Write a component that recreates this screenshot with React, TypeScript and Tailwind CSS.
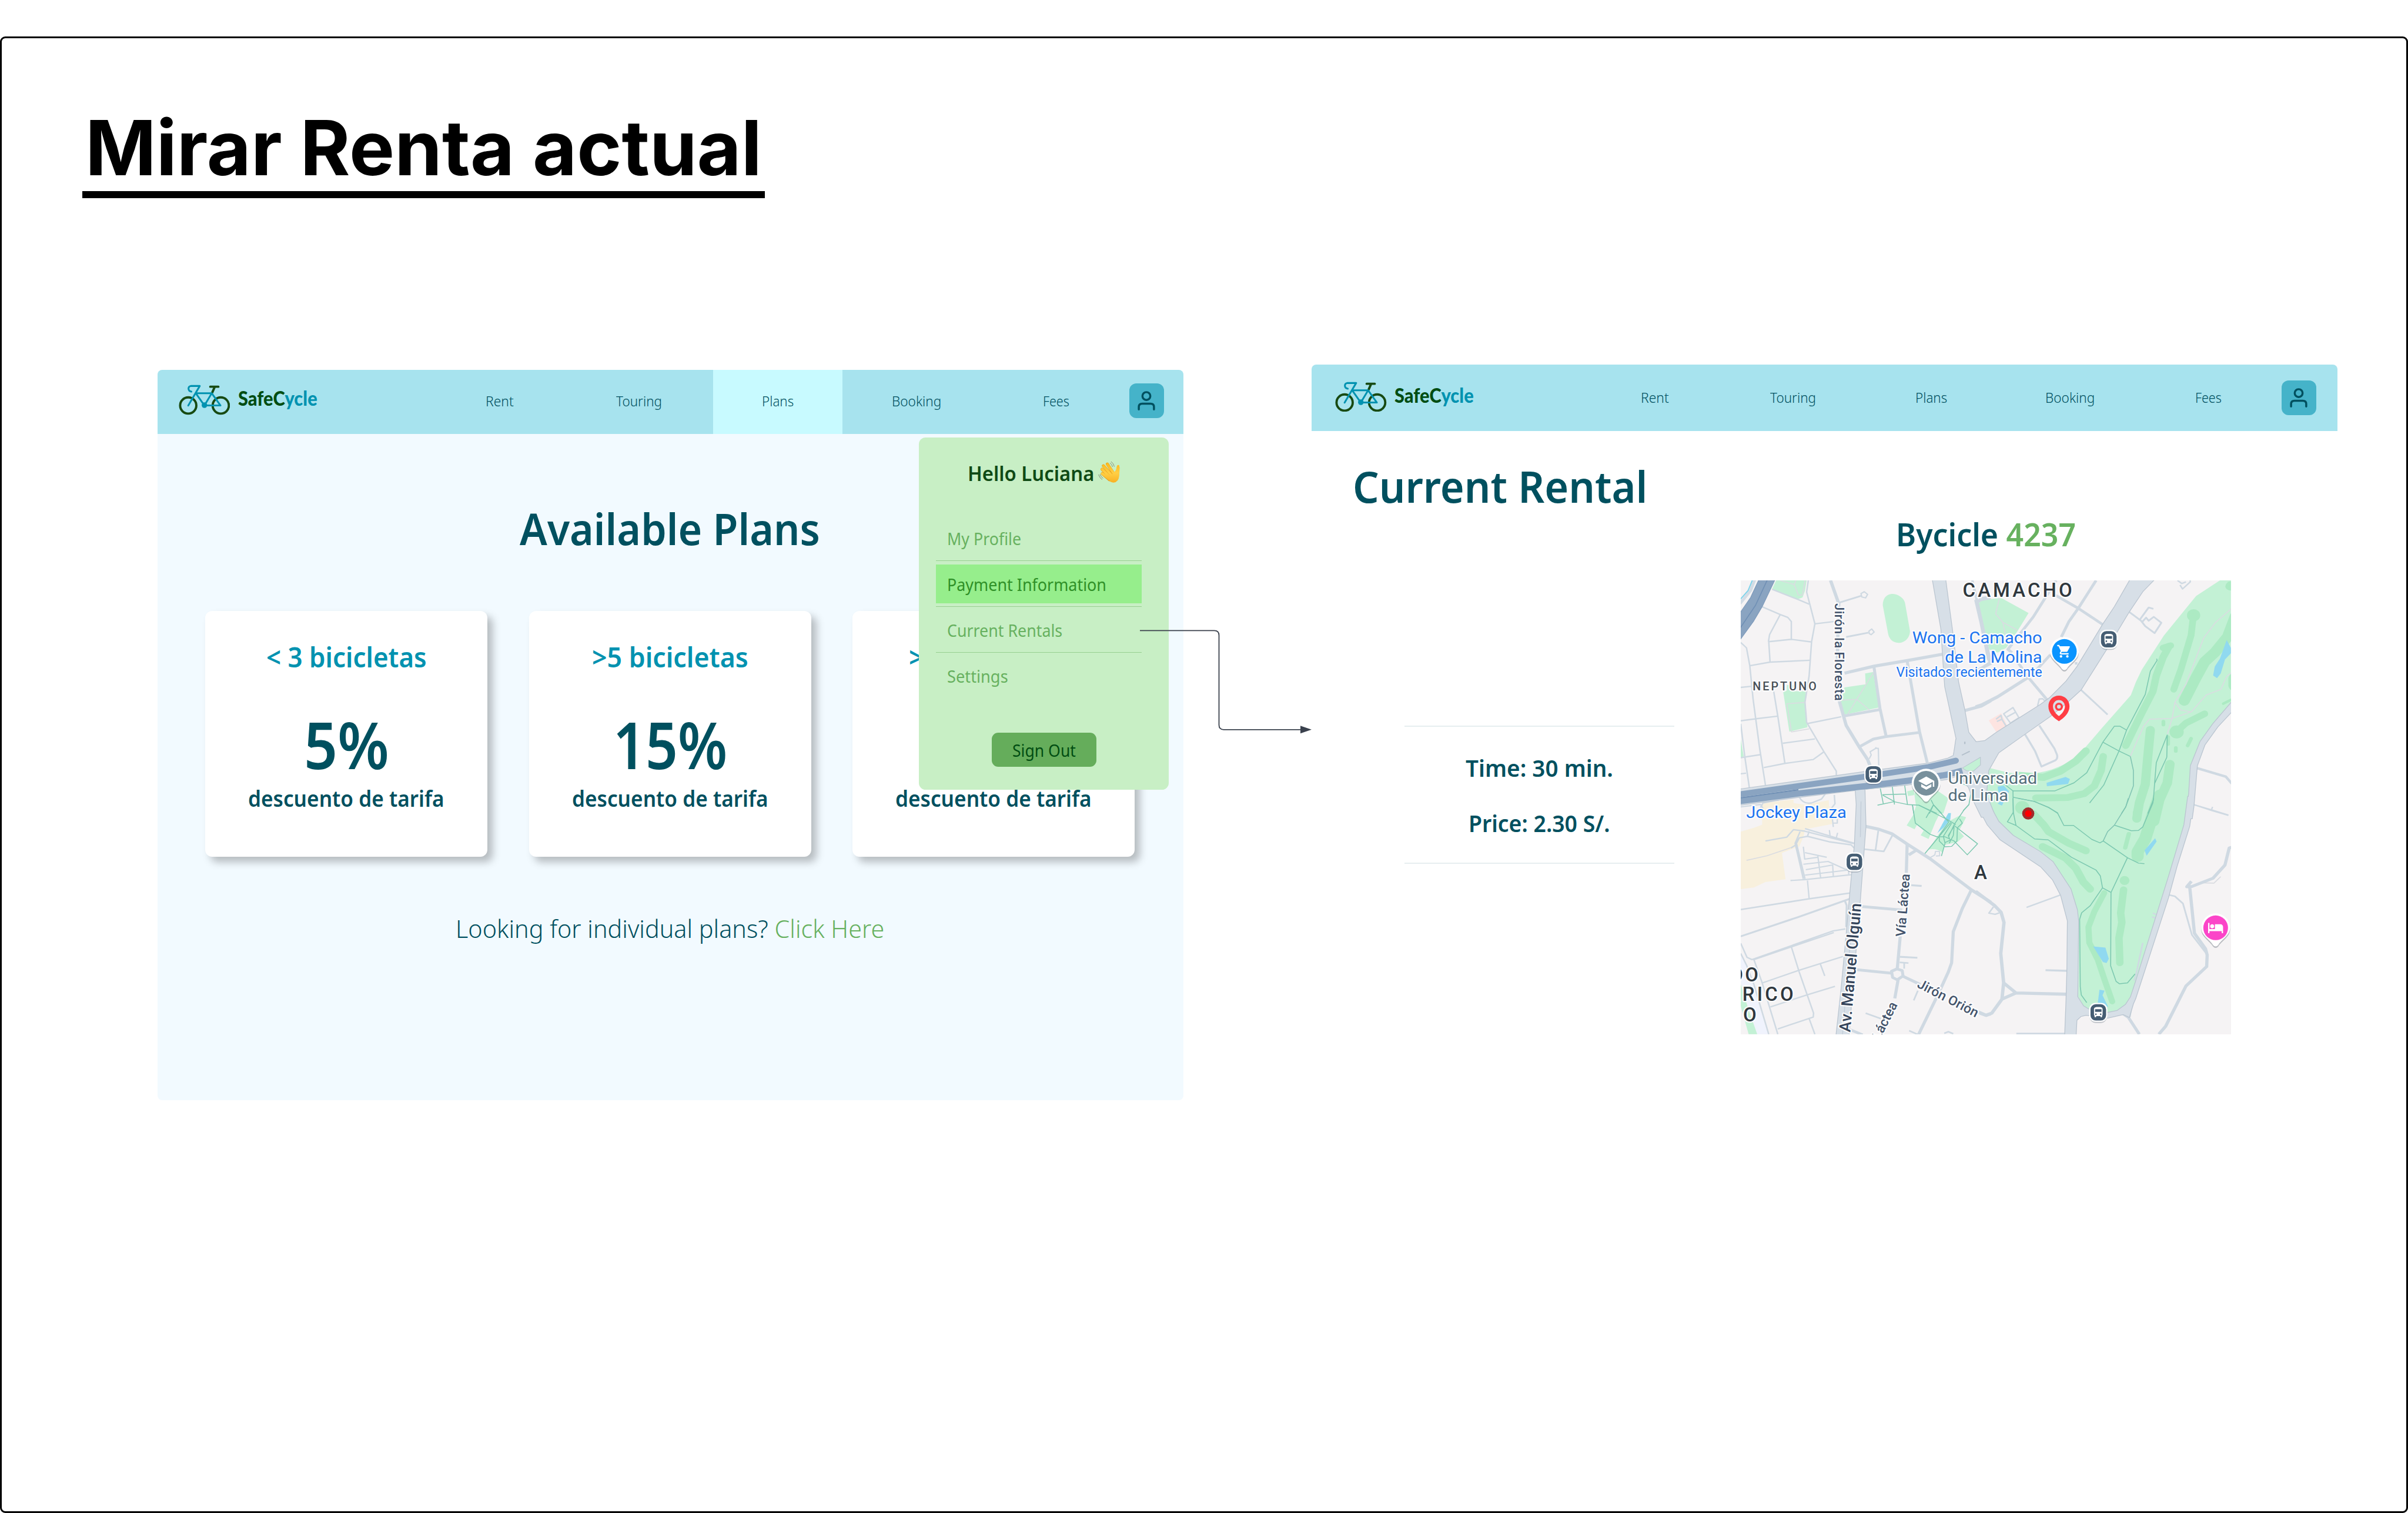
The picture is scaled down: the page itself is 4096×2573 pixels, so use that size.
import { useLayoutEffect, useRef, useState } from "react";
import type { ReactNode } from "react";
import { MdDirectionsBus, MdHotel, MdSchool, MdShoppingCart } from "react-icons/md";

/* Text squeezed or stretched horizontally to an exact width. */
function Fit({ w, className = "", children }: { w: number; className?: string; children: ReactNode }) {
  const ref = useRef<HTMLSpanElement>(null);
  const [scale, setScale] = useState(1);
  useLayoutEffect(() => {
    if (ref.current) setScale(w / ref.current.offsetWidth);
  }, [w]);
  return (
    <span className={`block ${className}`} style={{ width: w }}>
      <span ref={ref} className="inline-block origin-left whitespace-nowrap" style={{ transform: `scaleX(${scale})` }}>
        {children}
      </span>
    </span>
  );
}

function Bike() {
  return (
    <svg viewBox="60 96 406 240" className="h-[51.7px] w-[87.5px] shrink-0" fill="none" strokeLinecap="round" strokeLinejoin="round">
      <g stroke="#174a12" strokeWidth="18">
        <circle cx="135" cy="261" r="64" />
        <circle cx="392" cy="261" r="64" />
        <path d="M309 113H373M345 113L325 158" />
      </g>
      <g stroke="#0092b0" strokeWidth="14">
        <path d="M135 262L226 107H155Q137 110 137 128Q138 148 160 152" />
        <path d="M196 164H320L390 261H263L196 166M320 166L263 261" />
      </g>
      <circle cx="263" cy="259" r="22" fill="#0092b0" />
    </svg>
  );
}

function UserButton() {
  return (
    <span className="flex size-[59px] shrink-0 items-center justify-center rounded-[12px] bg-[#45b3c9]">
      <svg viewBox="0 0 46 52" className="h-[33.5px] w-[30px]" fill="none" stroke="#00505f" strokeWidth="5.4" strokeLinecap="round">
        <circle cx="23" cy="13.3" r="10.4" />
        <path d="M3 48.5V42Q3 33.5 12 33.5H34Q43 33.5 43 42V48.5" />
      </svg>
    </span>
  );
}

const LINKS = [
  { label: "Rent", w: 48 },
  { label: "Touring", w: 78.5 },
  { label: "Plans", w: 54.5 },
  { label: "Booking", w: 84.5 },
  { label: "Fees", w: 44.5 },
];

function NavBar({ active, right = false }: { active?: string; right?: boolean }) {
  return (
    <nav
      className={
        right
          ? "flex h-[112.2px] items-center rounded-t-[8px] bg-[#a7e3ee] pl-[40.4px]"
          : "flex h-[109.3px] items-center rounded-t-[8px] bg-[#a7e3ee] pl-[35.4px]"
      }
    >
      <div className={right ? "flex w-[434px] items-center pb-[4px]" : "flex w-[436.6px] items-center pb-[7px]"}>
        <Bike />
        <Fit w={134.5} className="-mt-[5px] ml-[13.5px] font-['Lato'] text-[33.5px] leading-[44px] font-black text-[#004d12]">
          SafeC<span className="text-[#0092b0]">ycle</span>
        </Fit>
      </div>
      <div className="flex h-full gap-4">
        {LINKS.map((l) => (
          <div
            key={l.label}
            className={`flex h-full items-center justify-center ${right ? "w-[219.4px]" : "w-[220.4px] pb-[2px]"} ${
              active === l.label ? "bg-[#c8faff]" : ""
            }`}
          >
            <Fit w={l.w} className="text-[23.8px] leading-[32px] font-light text-[#00505f]">
              {l.label}
            </Fit>
          </div>
        ))}
      </div>
      <div className={right ? "ml-[14.5px] pt-[1px]" : "ml-[14.6px] pb-[4px]"}>
        <UserButton />
      </div>
    </nav>
  );
}

function PlanCard({ title, titleW, value, valueW }: { title: string; titleW: number; value: string; valueW: number }) {
  return (
    <div className="flex h-[418px] w-[480px] shrink-0 flex-col items-center rounded-[12px] bg-white pt-[47.5px] shadow-[9px_9px_14px_rgba(0,0,0,0.25)]">
      <Fit w={titleW} className="text-[46px] leading-[60px] font-semibold text-[#0092b0]">
        {title}
      </Fit>
      <Fit w={valueW} className="mt-[58px] text-[111px] leading-[120px] font-semibold text-[#00505f]">
        {value}
      </Fit>
      <Fit w={334} className="mt-[8px] text-[37.5px] leading-[50px] font-semibold text-[#00505f]">
        descuento de tarifa
      </Fit>
    </div>
  );
}

function WavingHand() {
  return (
    <svg viewBox="0 0 100 100" className="ml-[7px] h-[37px] w-[37px] -translate-y-[2px]" fill="none" strokeLinecap="round" strokeLinejoin="round">
      <defs>
        <linearGradient id="skin" x1="0" y1="0" x2="0" y2="100" gradientUnits="userSpaceOnUse">
          <stop offset="0" stopColor="#fdb515" />
          <stop offset="0.55" stopColor="#ffcf45" />
          <stop offset="1" stopColor="#f9b022" />
        </linearGradient>
      </defs>
      <path d="M36 66L60 38L74 50Q84 44 86 26L99 28L97 66Q94 98 70 99Q58 99 46 84Z" fill="url(#skin)" />
      <g stroke="#e39a1c" strokeWidth="14">
        <path d="M42 14L66 50M24 22L58 60M18 38L50 70M19 58L52 86" />
      </g>
      <g stroke="url(#skin)" strokeWidth="11.5">
        <path d="M42 14L68 52M24 22L62 66M18 38L58 78M19 58L60 90M92 24L86 52" />
      </g>
      <g stroke="#7f7f72" strokeWidth="2.4">
        <path d="M60 3Q72 12 74 25M55 9Q64 16 66 26M2 63Q6 78 18 85M9 62Q12 73 22 79" />
      </g>
    </svg>
  );
}

const MENU = [
  { label: "My Profile", w: 126 },
  { label: "Payment Information", w: 271, on: true },
  { label: "Current Rentals", w: 196 },
  { label: "Settings", w: 104 },
];

function AccountMenu() {
  return (
    <aside className="absolute top-[115.2px] left-[1294.8px] h-[599px] w-[424.7px] rounded-[11.5px] bg-[#c8efc5] pt-[38.7px]">
      <div className="flex items-center pl-[83px]">
        <Fit w={215} className="text-[34.5px] leading-[44px] font-semibold text-[#0f4a15]">
          Hello Luciana
        </Fit>
        <WavingHand />
      </div>
      <ul className="mt-[49.3px] ml-[29.4px] w-[349.3px]">
        {MENU.map((m, i) => (
          <li key={m.label} className={`h-[78px] pt-[6.5px] ${i < 3 ? "border-b-[1.6px] border-[#97cf90]" : ""}`}>
            <div className={`flex h-[66px] items-center pt-[1px] pl-[18.5px] ${m.on ? "bg-[#96ee8c] text-[#2f9027]" : "text-[#67b15f]"}`}>
              <Fit w={m.w} className="text-[28.3px] leading-[38px]">
                {m.label}
              </Fit>
            </div>
          </li>
        ))}
      </ul>
      <button className="mt-[58.5px] ml-[123.7px] flex h-[58px] w-[178.7px] items-center justify-center rounded-[11px] bg-[#65ad5b] pt-[2px]">
        <Fit w={108} className="text-left text-[28.3px] leading-[38px] text-[#004d12]">
          Sign Out
        </Fit>
      </button>
    </aside>
  );
}

/* The map is digitised in four sheets, each with its own local grid. */
const SHEET = {
  A: "translate(4560 1500) scale(.43367 .40816)",
  B: "translate(5200 1500) scale(.44643 .40816)",
  C: "translate(4560 2100) scale(.43367 .40816)",
  D: "translate(5200 2100) scale(.44643 .40816)",
} as const;
type SheetId = keyof typeof SHEET;

const GREEN: [SheetId, string][] = [
  ["A", "M265 65H450L440 130L425 175L395 187L240 122Z"],
  ["A", "M912 225C912 175 940 152 972 152C1010 155 1040 180 1047 210L1077 390C1078 435 1045 468 1008 468C970 465 948 440 943 400Z"],
  ["A", "M308 785L330 775V740H375V780H445L440 900L455 1012L345 1040Z"],
  ["A", "M680 755L808 735L805 665L855 655L888 885L680 930L655 850Z"],
  ["A", "M50 1090L68 1200L50 1205Z"],
  ["A", "M1060 1425L1100 1415L1120 1568H1280L1310 1470L1230 1410H1120L1100 1450L1065 1455Z"],
  ["B", "M15 215L40 190L150 178L312 275L245 395L180 500L130 530L80 510L60 420Z"],
  ["B", "M1440 65H1505V870L1400 1000L1325 1110L1275 1260L1265 1440L1245 1590H110L60 1440L75 1290L85 1275C150 1290 200 1315 300 1310C400 1310 500 1275 600 1200L640 1150L750 1010L915 805L945 720L980 640L1110 420L1300 165Z"],
  ["D", "M60 -20L135 150L220 240L380 345L455 410L560 585L598 720L610 790L605 1280L635 1340L680 1370L780 1390L835 1375L885 1335L920 1280L950 1180L1065 780L1145 500L1235 170L1255 -20Z"],
  ["C", "M1130 0H1305L1232 152L1190 262L1142 238L1160 208L1120 170L1105 200L1057 175L1095 110Z"],
  ["C", "M1240 250L1300 155L1380 110L1418 122L1375 210L1405 245L1365 282L1290 300L1275 350Q1240 320 1190 330Z"],
  ["C", "M50 1200L100 1370L150 1521H98L50 1340Z"],
];

const FAIRWAYS: [SheetId, string, number][] = [
  ["B", "M1285 290V290.1", 78],
  ["B", "M1283 300L1270 420L1210 640L1168 768", 40],
  ["B", "M1530 300L1485 430L1410 530L1350 590L1300 690L1230 840", 66],
  ["B", "M1530 700V740", 80],
  ["B", "M1505 835L1460 860", 16],
  ["B", "M1140 490L1105 560L1065 680L1045 780L970 940L885 1130", 44],
  ["B", "M1105 500L1150 485", 40],
  ["B", "M1350 925L1240 985L1185 1040", 42],
  ["B", "M1185 1042V1042.1", 84],
  ["B", "M1030 1030L1015 1200L1000 1380L965 1500L950 1600", 54],
  ["B", "M1145 1250L1130 1370L1085 1480L1055 1620", 56],
  ["B", "M650 1165L590 1230L500 1295L400 1335L250 1322", 46],
  ["B", "M752 1200L740 1290L700 1390L640 1440L540 1465L355 1468", 44],
  ["B", "M1107 975V995M1270 1085L1250 1130M1180 1145V1165M1135 1075V1120", 22],
  ["D", "M275 60V60.1", 84],
  ["D", "M340 100L400 170L430 215L550 290L650 338", 46],
  ["D", "M395 312L530 385L590 450L635 540L675 585", 46],
  ["D", "M758 610L700 730L665 830L670 930L720 1040L760 1170L805 1310", 36],
  ["D", "M878 530V530.1", 58],
  ["D", "M872 590L855 740L862 800L845 900L850 1060", 44],
  ["D", "M903 230L882 318", 26],
  ["D", "M975 -10L948 95", 44],
  ["D", "M1085 -20L1040 120L1000 260L955 345V375", 72],
];

const WATER: [SheetId, string][] = [
  ["B", "M1480 450L1505 500V535L1470 575L1445 665L1423 695L1400 678L1410 620L1440 570Z"],
  ["B", "M418 1370L530 1332L556 1345L545 1378L420 1392Z"],
  ["B", "M130 1395L165 1388L198 1425L185 1450L135 1440ZM130 1505L150 1485L165 1495L155 1517Z"],
  ["D", "M1058 257L1067 278L1008 370L996 335Z"],
  ["D", "M693 955L765 963L785 1035L772 1062L750 1055Z"],
  ["D", "M730 1234L760 1240L748 1270L782 1345L720 1320Z"],
  ["C", "M1310 95H1326L1322 135L1285 185L1243 225Z"],
];

const SAND: [SheetId, string][] = [
  ["C", "M180 40H300L370 10V30L440 42L585 12V50L600 60L605 165L440 200L430 250L405 310L300 352L322 522L200 540L130 575L50 585V215L130 190L180 170Z"],
  ["A", "M180 1500L370 1478V1520L585 1495V1568H180Z"],
];

const MINOR: [SheetId, string, number][] = [
  ["A", "M240 122L395 187L465 218M460 65L450 140L500 345L480 460L465 680L440 850L450 980L555 1170L630 1295V1320", 9],
  ["A", "M180 235L290 285L335 303L357 330V445L220 460L228 592M290 285L225 415L218 460M357 445L480 462M105 615L228 592L472 580", 9],
  ["A", "M50 465L85 500L105 615L125 830L165 1150L200 1385M50 755L115 748M250 780L275 940L318 1245M50 970L145 957L275 940", 9],
  ["A", "M50 990L75 1205L102 1400M50 1208L172 1188M50 1312L82 1308M190 1272L318 1245L490 1220L555 1170M305 1115L500 1087M455 988L660 944", 9],
  ["A", "M500 345L620 330", 9],
  ["A", "M650 208L780 165M690 430L825 402", 11],
  ["A", "M780 150L800 138L820 155L808 178L785 172ZM828 392L845 378L860 398L842 415L830 408Z", 8],
  ["A", "M595 65L645 215L640 400L635 640L650 850L690 1000L770 1140L820 1220L835 1260", 20],
  ["A", "M680 663L860 618L1060 582L1280 540", 20],
  ["A", "M858 618L895 890L932 1068M1060 585L1135 1040L1182 1240M775 1135L855 1088L932 1072L1140 1045M670 940L895 898", 18],
  ["A", "M830 1215L842 1190L835 1170L870 1148H885L888 1270M870 1140V1150", 8],
  ["A", "M170 1530L185 1500L280 1480M405 1462Q430 1510 480 1500L540 1475L568 1435M618 1448L622 1505L600 1535", 9],
  ["A", "M1408 905L1510 875L1568 840", 20],
  ["B", "M0 880L35 868L130 815L310 690", 20],
  ["A", "M1455 65L1500 270L1560 560L1568 590M1480 210L1510 190L1568 178", 16],
  ["A", "M1500 640L1568 590", 16],
  ["B", "M0 190L30 330L75 570L90 600L0 650", 18],
  ["B", "M10 205L35 180L80 172M475 65L340 300L190 510L215 530M710 65L605 245L550 330L505 430M470 160L605 245L750 350", 17],
  ["B", "M250 595L310 690L425 840M360 640L440 545", 17],
  ["B", "M365 875L375 830L395 828L415 850M165 925L220 885L255 950L205 985ZM185 945L235 915M120 960L150 935L155 960L125 975M155 960L185 1015", 9],
  ["B", "M1190 65L1215 85L1240 75M1205 95L1220 120L1265 75V65", 9],
  ["B", "M905 268L975 325L1000 360L1055 405L1095 338L1050 300L1020 325L1005 305L980 335M968 318L1020 240L1048 248", 11],
  ["B", "M620 770L778 930", 11],
  ["B", "M290 1055L350 1165L388 1265L470 1225Q485 1215 480 1190L465 1150L375 1000", 12],
  ["B", "M585 600H600M1305 1275L1475 1330L1510 1375", 16],
  ["B", "M1285 1510L1395 1550L1490 1580", 8],
  ["D", "M1285 40L1395 75L1490 108M1390 75L1397 55", 8],
  ["D", "M0 600L110 690L150 735L167 800L148 1000L165 1190L155 1295M165 1190L238 1255L155 1295L95 1385L60 1398L0 1370M238 1255L535 1263", 20],
  ["D", "M105 700L78 740L115 748L140 738M300 703L503 622", 9],
  ["D", "M412 1108L540 1112M240 1518H527", 13],
  ["D", "M1510 315L1495 320L1470 430L1400 515L1275 568L1245 570L1272 535M1262 570L1290 870L1355 970L1365 1010L1362 1085L1240 1210L1120 1470L1080 1521", 19],
  ["D", "M1138 622L1175 632L1222 678L1275 880L1360 1000", 10],
  ["D", "M870 1390L900 1412L965 1521M905 1410L915 1340L870 1385", 18],
  ["D", "M985 932L945 1140L935 1175M1045 740L1065 750M1040 765L1062 772", 9],
  ["C", "M805 180L890 200L970 230L1060 295L1200 390L1450 590L1568 670", 20],
  ["C", "M1450 590L1395 710L1340 860L1330 1060L1310 1120L1245 1270L1130 1521M1060 295L1055 480M1018 890L1000 1100M1070 365L1115 335", 19],
  ["C", "M970 240L918 342L800 328M885 208L868 335", 10],
  ["C", "M785 698L1030 720M755 1105L960 1127M998 1100L965 1115L972 1155L1000 1170L1035 1145L1030 1110Z", 18],
  ["C", "M1030 1145L1140 1200M1005 1170L985 1290M1500 1385L1540 1400L1568 1390", 19],
  ["C", "M1085 560L1148 565M1015 1022L1122 1028", 12],
  ["C", "M1015 1058L1068 1062M1042 1062V1098M1125 1240L1100 1303M808 1385L900 1420M1072 1498L1130 1525M1285 1515L1310 1505L1340 1518", 10],
  ["C", "M710 1490L790 1525", 17],
  ["C", "M1195 385L1228 365L1232 342H1256L1258 370L1235 372", 7],
  ["C", "M50 55L170 40L185 65V110M605 120L612 185M612 160H636V120", 8],
  ["C", "M200 275L330 250L370 202L440 212L735 292M440 195L740 290M465 212L455 245L405 255L388 290L440 520M410 215L380 290L430 520M455 245L585 280L720 300L742 325M355 320L385 300", 9],
  ["C", "M588 205L592 240M638 222L630 255M430 312L438 392L518 380M440 350L572 380M518 372L535 515M430 425L580 407L695 462M445 460L608 430L612 505M440 495L705 462V490M352 530L440 524L725 492M455 530L465 645", 8],
  ["C", "M50 717L465 648L718 610", 10],
  ["C", "M50 890L400 765L712 648M680 655L693 690L690 830", 12],
  ["C", "M50 935L88 1025L118 1040L610 855L685 842M125 1042L615 865M130 1040L180 1190L275 1521M50 1000L85 1075L130 1200L220 1521", 9],
  ["C", "M182 1190L400 1110L670 1020M355 950L405 1120L492 1385L490 1410L275 1487M230 1345L450 1268L622 1212M532 1065L560 1145M465 1420L500 1521", 9],
];

const PATHS: [SheetId, string][] = [
  ["A", "M290 65L375 92L400 160H425L440 65M375 92L385 65M330 860L437 852M330 860L358 1042L465 1022M855 660L755 830L700 925M665 837L755 832L830 900"],
  ["B", "M140 180L118 280L160 335L245 385M160 335L175 410"],
  ["B", "M1505 250L1415 335L1345 435L1240 735L1175 850L1158 955L1130 1055M1175 850L1210 902L1272 912L1360 803L1445 768L1480 685L1505 662M1272 912L1158 955L1025 960L990 1005L912 1200L930 1290V1390L885 1525L860 1568"],
  ["D", "M900 0L885 55L820 170L778 215L752 275M1340 545L1405 547L1445 505"],
  ["C", "M85 400L210 370L355 318"],
];

const TRAILS: [SheetId, string][] = [
  ["B", "M1067 570L1070 580L1030 650L1000 800L890 1030L845 1165L755 1385L672 1500M890 1030L850 1005H818L750 1108L655 1305L580 1370L468 1422H220L165 1375M750 1108L845 1165L912 1200"],
  ["B", "M220 1418L222 1568M220 1463L345 1490L430 1528L485 1568M1130 1060L1065 1240L1055 1375L1048 1480L1015 1568M1130 1060L1127 1205L1055 1375M912 1200L930 1290V1390L885 1525L860 1568"],
  ["D", "M220 0L222 90L238 175L187 152L222 90M238 175L348 262L428 268L565 380L710 463L735 500L748 577L798 607L895 383L752 275L733 287L685 265L577 175H520L482 93L430 60L345 20L250 0"],
  ["D", "M1048 0L1045 30L985 185L960 207L918 209L818 173L778 215L752 275M818 173L885 55L900 0M895 383L960 418L995 421M748 577L675 693L625 738L613 780L617 1215L623 1268L655 1317M798 607L796 1080L828 1180L848 1196L895 1190L940 1132"],
  ["A", "M810 1410L1085 1380M897 1407L915 1503M970 1395L983 1510M1045 1387L1062 1510M910 1447L1055 1442M912 1450L985 1492M880 1514L980 1492L1062 1510L1130 1514L1240 1568M1092 1510L1100 1568M1205 1480L1220 1512L1270 1568M1220 1512L1195 1568M1400 1378Q1440 1390 1450 1420L1435 1510L1400 1550"],
  ["C", "M1220 42L1175 126M1130 44L1310 140L1355 170M1220 42L1310 150M1092 42L1110 160L1200 232L1240 248H1290L1345 275L1425 364L1487 293L1345 175M1435 40L1405 75L1345 170L1310 250M1325 155L1165 360M1330 160L1280 245L1290 290L1268 372M1315 150L1255 240V275L1290 312L1330 310L1362 275L1365 190L1395 160L1378 132M1345 180L1310 240L1320 270L1290 285M1345 185L1340 240L1315 290"],
];

const AVENUES: [SheetId, string][] = [
  ["A", "M1215 60L1267 380L1280 600L1290 750L1362 1100L1342 1195L1290 1222L1400 1280L1500 1200L1478 1108L1432 1045L1408 900L1370 720L1335 400L1292 60Z"],
  ["B", "M-4 1108L55 1100L125 1045L385 865L440 820L535 715L600 620L750 350L820 235L912 60H1052L985 135L905 265L770 510L620 770L540 850L440 940L290 1055L135 1175L75 1290L62 1440L115 1590H35L-10 1490L-40 1400L-110 1300L-130 1200L-115 1090L-60 1040Z"],
  ["B", "M1510 850L1400 990L1325 1105L1268 1260L1258 1440L1238 1600H1275L1285 1520L1305 1260L1350 1125L1425 1010L1510 910Z"],
  ["D", "M1252 -10L1230 170L1140 500L1060 780L945 1180L915 1280L885 1330L835 1370L780 1382L665 1360L635 1340L600 1280L605 790L598 720L560 585L455 410L380 345L220 240L135 150L70 20L45 -30H-20L0 25L70 170L145 265L385 440L455 525L503 625L543 790L540 1110L535 1300L527 1530H590L595 1430L620 1405L650 1397L780 1415L870 1392L905 1410L928 1325L942 1290L1135 640L1185 440L1260 180L1285 -10Z"],
  ["C", "M747 -55H802L808 180L775 640L720 1330L705 1530H630L660 1240L690 900L715 600L742 300L753 40Z"],
  ["A", "M45 1412L800 1300L1190 1245L1300 1215L1420 1260L1400 1310L1310 1345L1100 1378L800 1410L400 1462L45 1512Z"],
];

const LABEL = { stroke: "#fbfbfc", strokeWidth: 7, strokeLinejoin: "round", paintOrder: "stroke" } as const;

function BusStop({ x, y }: { x: number; y: number }) {
  return (
    <g>
      <rect x={x - 23} y={y - 20} width="46" height="48" rx="17" fill="#5d6b78" opacity="0.35" />
      <rect x={x - 24} y={y - 25} width="48" height="50" rx="17" fill="#fff" />
      <rect x={x - 20.5} y={y - 21.5} width="41" height="43" rx="14" fill="#455d73" />
      <MdDirectionsBus x={x - 17} y={y - 17} size={34} color="#fff" />
    </g>
  );
}

function Pin({ x, y, fill, children }: { x: number; y: number; fill: string; children: ReactNode }) {
  const d = `M${x} ${y - 38}a38 38 0 0 1 38 38c0 20 -22 30 -31 45q-7 8 -14 0c-9 -15 -31 -25 -31 -45a38 38 0 0 1 38 -38z`;
  return (
    <g>
      <path d={d} fill="#4b5560" opacity="0.35" transform="translate(0 4)" />
      <path d={d} fill="#fff" />
      <circle cx={x} cy={y} r="32.5" fill={fill} />
      {children}
    </g>
  );
}

function CampusMap() {
  return (
    <svg viewBox="4581.7 1526.5 1290.2 1194.3" preserveAspectRatio="none" className="block h-[771.8px] w-[833.8px]" fill="none">
      <rect x="4580" y="1525" width="1294" height="1198" fill="#f5f3f4" />
      {SAND.map(([s, d], i) => (
        <path key={i} transform={SHEET[s]} d={d} fill="#f8f0dd" />
      ))}
      <path transform={SHEET.C} d="M50 1020L85 1070L150 1300L215 1521H150L95 1340L50 1190Z" fill="#f0f3fd" />
      <path transform={SHEET.B} d="M77 968L150 922L190 1010L125 1048Z" fill="#fde4e1" />
      {GREEN.map(([s, d], i) => (
        <path key={i} transform={SHEET[s]} d={d} fill="#c3f1d5" />
      ))}
      <g stroke="#aceac3" strokeLinecap="round" strokeLinejoin="round">
        {FAIRWAYS.map(([s, d, w], i) => (
          <path key={i} transform={SHEET[s]} d={d} strokeWidth={w} />
        ))}
      </g>
      <path transform={SHEET.B} d="M1472 105Q1475 75 1505 70V130Q1475 130 1472 105Z" fill="#aceac3" />
      {WATER.map(([s, d], i) => (
        <path key={i} transform={SHEET[s]} d={d} fill="#90d9f0" />
      ))}
      <g stroke="#dadce1" strokeWidth="6" strokeLinejoin="round">
        {PATHS.map(([s, d], i) => (
          <path key={i} transform={SHEET[s]} d={d} />
        ))}
      </g>
      <g stroke="#7cc8b0" strokeWidth="5.5" strokeLinejoin="round">
        {TRAILS.map(([s, d], i) => (
          <path key={i} transform={SHEET[s]} d={d} />
        ))}
      </g>
      <g stroke="#cfd9e2" strokeLinejoin="round">
        {MINOR.map(([s, d, w], i) => (
          <path key={i} transform={SHEET[s]} d={d} strokeWidth={w} />
        ))}
      </g>
      <g stroke="#bac5d0" strokeWidth="9">
        {AVENUES.map(([s, d], i) => (
          <path key={i} transform={SHEET[s]} d={d} />
        ))}
      </g>
      <g fill="#d7dfe7">
        {AVENUES.map(([s, d], i) => (
          <path key={i} transform={SHEET[s]} d={d} />
        ))}
      </g>
      <g transform={SHEET.A} strokeLinejoin="round">
        <path d="M1395 1275L1505 1205V1255L1462 1295L1420 1292Z" fill="#c3f1d5" stroke="#bac5d0" strokeWidth="4" />
        <path d="M1392 1192L1440 1167" stroke="#b3bfcb" strokeWidth="7" />
        <path d="M1410 1105V1120" stroke="#b3bfcb" strokeWidth="8" />
        <path d="M40 1445L820 1328L1190 1268L1355 1227" stroke="#8aa4c1" strokeWidth="38" strokeLinecap="round" />
        <path d="M40 1489L420 1436L820 1390L1100 1352L1300 1318L1395 1292" stroke="#8aa4c1" strokeWidth="40" />
        <path d="M50 1467L400 1415" stroke="#7090b5" strokeWidth="8" />
        <path d="M135 60L110 130L45 215" stroke="#d3dce5" strokeWidth="18" />
        <path d="M122 60L95 130L45 190" stroke="#7fd3ea" strokeWidth="7" />
        <path d="M160 60H258L180 235L130 325L45 450V275L110 175Z" fill="#8aa4c1" stroke="#7b98b9" strokeWidth="4" />
        <path d="M212 60L140 225L45 375" stroke="#7090b5" strokeWidth="6" />
      </g>
      <path transform={SHEET.C} d="M780 20L776 250M735 700L700 1100L668 1521" stroke="#c3cdd8" strokeWidth="5" />

      <g {...LABEL} fontFamily="Roboto" fontWeight="500">
        <g fill="#2f373d" fontSize="51">
          <text x="5166" y="1569.4" textLength="288" lengthAdjust="spacing">CAMACHO</text>
          <text x="5196" y="2312.4">A</text>
          <text x="4633" y="2581.8" textAnchor="end" letterSpacing="5">DO</text>
          <text x="4727" y="2633.7" textAnchor="end" letterSpacing="6.5">RRICO</text>
          <text x="4624" y="2686.7" textAnchor="end" letterSpacing="1">O</text>
        </g>
        <text x="4613" y="1815.7" fontSize="30.5" textLength="168" fill="#474f56">NEPTUNO</text>
        <g fontWeight="400" fill="#1a73f0">
          <text x="5033" y="1692.8" fontSize="43" textLength="342" lengthAdjust="spacingAndGlyphs">Wong - Camacho</text>
          <text x="5119" y="1743" fontSize="43" textLength="256" lengthAdjust="spacingAndGlyphs">de La Molina</text>
          <text x="4991" y="1780.6" fontSize="36" textLength="384" lengthAdjust="spacingAndGlyphs">Visitados recientemente</text>
          <text x="4596" y="2152.4" fontSize="43" textLength="264" lengthAdjust="spacingAndGlyphs">Jockey Plaza</text>
        </g>
        <g fontWeight="400" fill="#546e7a">
          <text x="5127" y="2061.4" fontSize="43" textLength="235" lengthAdjust="spacingAndGlyphs">Universidad</text>
          <text x="5127" y="2106.3" fontSize="43" textLength="159" lengthAdjust="spacingAndGlyphs">de Lima</text>
        </g>
        <g fill="#42526a">
          <text transform="translate(4829 1587) rotate(90)" fontSize="34" textLength="256">Jirón la Floresta</text>
          <text transform="translate(5014 2465) rotate(-85.5)" fontSize="35" textLength="166">Vía Láctea</text>
          <text transform="translate(4995 2643) rotate(-63)" fontSize="35" textAnchor="end">Vía Láctea</text>
          <text transform="translate(5044 2596) rotate(27.5)" fontSize="35" textLength="176">Jirón Orión</text>
        </g>
        <text transform="translate(4870 2716) rotate(-85.1)" fontSize="42" textLength="340" fill="#34445a">Av. Manuel Olguín</text>
      </g>

      <BusStop x={4930.8} y={2036.9} />
      <BusStop x={5550.4} y={1681.6} />
      <BusStop x={4880.9} y={2267.3} />
      <BusStop x={5522.8} y={2663.3} />
      <Pin x={5069.6} y={2060.2} fill="#78909c">
        <MdSchool x={5047} y={2037} size={46} color="#fff" />
      </Pin>
      <Pin x={5433.5} y={1713.5} fill="#0a94ff">
        <MdShoppingCart x={5413} y={1693} size={40} color="#fff" />
      </Pin>
      <Pin x={5831.7} y={2440.8} fill="#fb45c8">
        <MdHotel x={5810} y={2419} size={43} color="#fff" />
      </Pin>
      <path
        fillRule="evenodd"
        fill="#ff3d44"
        d="M5419.2 1829.8C5435 1829.8 5447 1842 5447 1858C5447 1876 5432 1889 5419.2 1897C5406 1889 5391.500 1876 5391.500 1858C5391.500 1842 5403 1829.8 5419.2 1829.8ZM5419.2 1841.500C5410 1841.500 5403.500 1849 5403.500 1858C5403.500 1868 5411 1878 5419.2 1883.500C5427 1878 5435 1868 5435 1858C5435 1849 5428 1841.500 5419.2 1841.500Z"
      />
      <circle cx="5419.2" cy="1859" r="7.8" stroke="#ff3d44" strokeWidth="5.500" />
      <circle cx="5338.4" cy="2140" r="16" fill="#a02b2b" />
      <circle cx="5338.4" cy="2140" r="8.800" fill="#ff0000" />
    </svg>
  );
}

function PlansScreen() {
  return (
    <section className="relative mt-[291.8px] flex h-[1242px] w-[1744.4px] shrink-0 flex-col rounded-[8px] bg-[#f2faff]">
      <NavBar active="Plans" />
      <h2 className="mt-[110.6px] flex justify-center pr-[2px] text-[74px] leading-[100px] font-semibold text-[#00505f]">
        <Fit w={511}>Available Plans</Fit>
      </h2>
      <div className="mt-[90.4px] flex gap-[70.5px] pl-[81px]">
        <PlanCard title="< 3 bicicletas" titleW={273} value="5%" valueW={145} />
        <PlanCard title=">5 bicicletas" titleW={266} value="15%" valueW={194} />
        <PlanCard title=">10 bicicletas" titleW={288} value="20%" valueW={194} />
      </div>
      <p className="mt-[91.7px] flex justify-center pr-[2px] text-[42.5px] leading-[60px] font-light text-[#00505f]">
        <Fit w={729}>
          Looking for individual plans? <span className="text-[#67b15f]">Click Here</span>
        </Fit>
      </p>
      <AccountMenu />
    </section>
  );
}

function RentalScreen() {
  return (
    <section className="mt-[283.4px] w-[1745px] shrink-0">
      <NavBar right />
      <div className="flex">
        <div className="w-[730.2px]">
          <h2 className="mt-[44px] pl-[70px] text-[74px] leading-[100px] font-semibold text-[#00505f]">
            <Fit w={501}>Current Rental</Fit>
          </h2>
          <div className="mt-[357.2px] ml-[158px] flex h-[235.3px] w-[459.7px] flex-col items-center border-y-[2.5px] border-[#e6eef0] pt-[41.8px] text-[40.5px] leading-[56px] font-semibold text-[#00505f]">
            <Fit w={251}>Time: 30 min.</Fit>
            <Fit w={241} className="mt-[38.4px]">
              Price: 2.30 S/.
            </Fit>
          </div>
        </div>
        <div className="flex flex-col items-center pt-[137.3px]">
          <h3 className="mb-[41.2px] text-[54.5px] leading-[76px] font-semibold text-[#00505f]">
            <Fit w={306}>
              Bycicle <span className="text-[#67b15f]">4237</span>
            </Fit>
          </h3>
          <CampusMap />
        </div>
      </div>
    </section>
  );
}

export default function App() {
  return (
    <main className="h-[2573px] w-[4096px] overflow-hidden bg-white pt-[62px] font-['Noto_Sans',sans-serif]">
      <div className="relative h-[2511px] rounded-[9px] border-[3px] border-black">
        <h1 className="mt-[113px] ml-[137.2px] flex h-[159px] w-[1160.6px] items-center justify-center border-b-[12px] border-black font-['Inter'] text-[129.25px] leading-[147px] font-bold text-black">
          <Fit w={1151}>Mirar Renta actual</Fit>
        </h1>
        <div className="flex items-start gap-[218.1px] pl-[265.3px]">
          <PlansScreen />
          <RentalScreen />
        </div>
        <svg viewBox="1936 1065 296 184" className="absolute top-[1000px] left-[1933px] h-[184px] w-[296px]" fill="none">
          <path d="M1939 1072.4H2065.500Q2073.500 1072.4 2073.500 1080.400V1232.800Q2073.500 1240.800 2081.500 1240.800H2214" stroke="#3a414d" strokeWidth="1.800" />
          <path d="M2212 1234.300L2231 1240.800L2212 1247.300Z" fill="#3a414d" />
        </svg>
      </div>
    </main>
  );
}
